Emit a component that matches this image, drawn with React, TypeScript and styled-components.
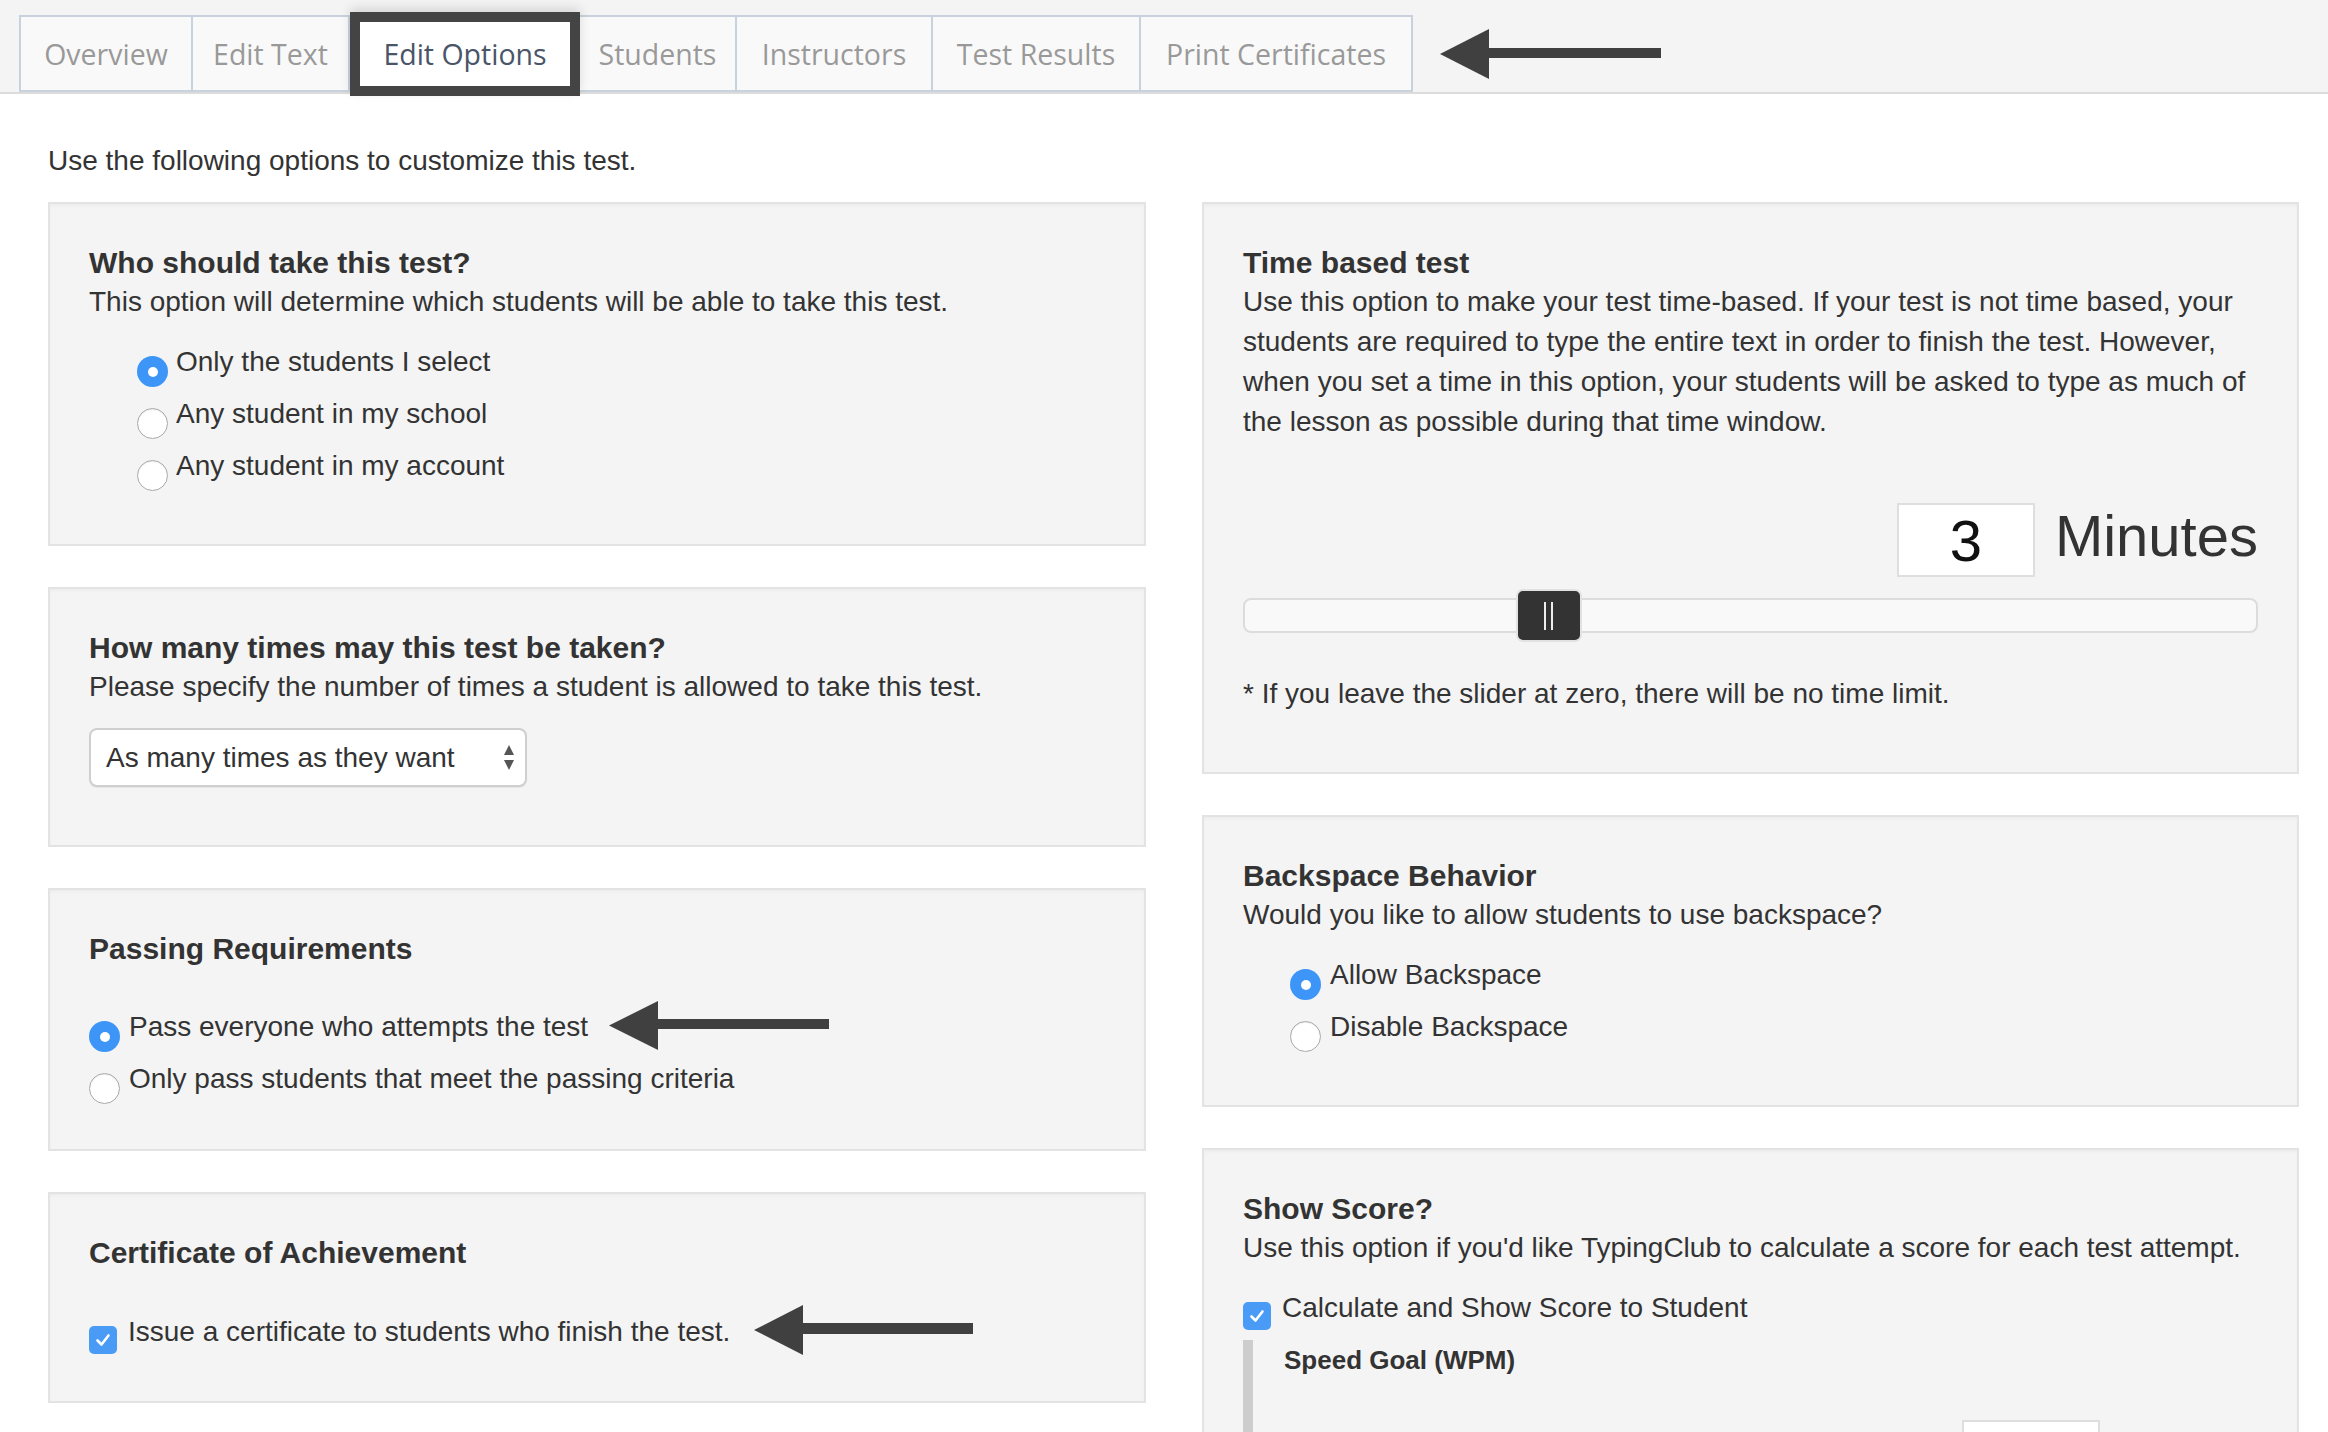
import React from 'react';
import styled, { createGlobalStyle } from 'styled-components';

const Global = createGlobalStyle`
  html, body { margin: 0; padding: 0; background: #ffffff; }
  body { font-family: "Liberation Sans", Arial, Helvetica, sans-serif; color: #333333; }
  * { box-sizing: border-box; }
`;

const Header = styled.header`
  height: 94px;
  background: #f4f4f4;
  border-bottom: 2px solid #dcdcdc;
  padding: 15px 0 0 19px;
  display: flex;
  align-items: flex-start;
`;

const Tab = styled.div<{ $w: number; $first?: boolean }>`
  width: ${(p) => p.$w}px;
  height: 77px;
  display: flex;
  align-items: center;
  justify-content: center;
  background: #f9f9f9;
  border: 2px solid #c8d2df;
  border-left-width: ${(p) => (p.$first ? 2 : 0)}px;
  font-family: "Open Sans", "Noto Sans", sans-serif;
  font-size: 28.5px;
  color: #999999;
  white-space: nowrap;
`;

const ActiveTab = styled(Tab)`
  height: 84px;
  margin-top: -3px;
  border: 10px solid #444444;
  background: #ffffff;
  color: #4a5568;
  position: relative;
  z-index: 1;
  box-shadow: 0 -4px 10px rgba(0, 0, 0, 0.12);
`;

const ArrowSvg = styled.svg<{ $ml?: number; $mt?: number }>`
  flex: none;
  display: block;
  margin-left: ${(p) => p.$ml ?? 0}px;
  margin-top: ${(p) => p.$mt ?? 0}px;
`;

const Main = styled.main`
  padding: 47px 29px 80px 48px;
`;

const Intro = styled.p`
  margin: 0;
  font-size: 28px;
  line-height: 40px;
  color: #333333;
`;

const Columns = styled.div`
  display: grid;
  grid-template-columns: 1098px 1097px;
  column-gap: 56px;
  margin-top: 21px;
  align-items: start;
`;

const Column = styled.div`
  display: flex;
  flex-direction: column;
  gap: 41px;
`;

const Card = styled.section<{ $pb?: number }>`
  background: #f4f4f4;
  border: 2px solid #e3e3e3;
  box-shadow: inset 0 2px 3px rgba(0, 0, 0, 0.03);
  padding: 40px 39px ${(p) => p.$pb ?? 58}px;
`;

const Heading = styled.h3`
  margin: 0;
  font-size: 30px;
  line-height: 38px;
  font-weight: 700;
  color: #333333;
`;

const Desc = styled.p`
  margin: 0;
  font-size: 28px;
  line-height: 40px;
  color: #333333;
`;

const OptionList = styled.div<{ $mt: number; $indent?: number }>`
  display: flex;
  flex-direction: column;
  gap: 12px;
  margin-top: ${(p) => p.$mt}px;
  padding-left: ${(p) => p.$indent ?? 0}px;
`;

const OptionRow = styled.label<{ $gap?: number }>`
  display: flex;
  align-items: flex-start;
  height: 40px;
  gap: ${(p) => p.$gap ?? 8}px;
  font-size: 28px;
  line-height: 40px;
  color: #333333;
  white-space: nowrap;
`;

const Radio = styled.span<{ $on?: boolean }>`
  flex: none;
  width: 31px;
  height: 31px;
  margin-top: 14px;
  border-radius: 50%;
  position: relative;
  background: ${(p) => (p.$on ? '#3d95f7' : '#ffffff')};
  border: ${(p) => (p.$on ? 'none' : '1px solid #a9a9a9')};
  box-shadow: ${(p) => (p.$on ? 'none' : 'inset 0 1px 1px rgba(0,0,0,0.08)')};
  &::after {
    content: '';
    display: ${(p) => (p.$on ? 'block' : 'none')};
    position: absolute;
    left: 50%;
    top: 50%;
    width: 10px;
    height: 10px;
    margin: -5px 0 0 -5px;
    border-radius: 50%;
    background: #ffffff;
  }
`;

const Checkbox = styled.span`
  flex: none;
  width: 28px;
  height: 28px;
  margin-top: 14px;
  border-radius: 5px;
  background: #4a9bf6;
  display: flex;
  align-items: center;
  justify-content: center;
`;

const SelectBox = styled.div`
  width: 438px;
  height: 59px;
  margin-top: 21px;
  background: #ffffff;
  border: 2px solid #cfcfcf;
  border-radius: 8px;
  box-shadow: 0 1px 1px rgba(0, 0, 0, 0.06);
  padding: 0 10px 0 15px;
  display: flex;
  align-items: center;
  justify-content: space-between;
  font-size: 28px;
  color: #333333;
`;

const ValueRow = styled.div<{ $mt: number; $gap: number }>`
  display: flex;
  justify-content: flex-end;
  align-items: flex-start;
  gap: ${(p) => p.$gap}px;
  margin-top: ${(p) => p.$mt}px;
`;

const NumberBox = styled.div`
  width: 138px;
  height: 74px;
  background: #ffffff;
  border: 2px solid #dedede;
  display: flex;
  align-items: center;
  justify-content: center;
  font-size: 58px;
  color: #111111;
`;

const UnitText = styled.span`
  font-size: 58px;
  line-height: 66px;
  color: #333333;
`;

const Track = styled.div`
  position: relative;
  height: 35px;
  margin-top: 21px;
  background: #f9f9f9;
  border: 2px solid #dcdcdc;
  border-radius: 8px;
`;

const Handle = styled.div`
  position: absolute;
  top: -11px;
  width: 66px;
  height: 53px;
  background: #333333;
  border: 2px solid #e2e2e2;
  border-radius: 7px;
  display: flex;
  align-items: center;
  justify-content: center;
  gap: 5px;
`;

const Grip = styled.span`
  width: 2px;
  height: 28px;
  background: #eeeeee;
`;

const Footnote = styled.p`
  margin: 41px 0 0;
  font-size: 28px;
  line-height: 40px;
  color: #333333;
`;

const SubSection = styled.div`
  margin-top: 12px;
  border-left: 10px solid #cdcdcd;
  padding: 3px 0 0 31px;
  min-height: 260px;
`;

const SubHeading = styled.h4`
  margin: 0;
  font-size: 26px;
  line-height: 34px;
  font-weight: 700;
  color: #333333;
`;

type ArrowProps = { w: number; h: number; shaftTop: number; shaftH: number; ml?: number; mt?: number };

const Arrow = ({ w, h, shaftTop, shaftH, ml, mt }: ArrowProps) => (
  <ArrowSvg width={w} height={h} viewBox={`0 0 ${w} ${h}`} $ml={ml} $mt={mt}>
    <polygon points={`0,${h / 2} 49,0 49,${h}`} fill="#404040" />
    <rect x={47} y={shaftTop} width={w - 47} height={shaftH} fill="#404040" />
  </ArrowSvg>
);

const CheckMark = () => (
  <svg width="20" height="20" viewBox="0 0 20 20">
    <path d="M4.5 10.5 L8.5 14.5 L15.5 5.5" fill="none" stroke="#ffffff" strokeWidth="2.6" strokeLinecap="round" strokeLinejoin="round" />
  </svg>
);

const SelectArrows = () => (
  <svg width="12" height="26" viewBox="0 0 12 26">
    <polygon points="6,0 11,10 1,10" fill="#555555" />
    <polygon points="1,15 11,15 6,25" fill="#555555" />
  </svg>
);

const tabs = [
  { label: 'Overview', w: 174 },
  { label: 'Edit Text', w: 157 },
  { label: 'Edit Options', w: 230, active: true },
  { label: 'Students', w: 157 },
  { label: 'Instructors', w: 196 },
  { label: 'Test Results', w: 208 },
  { label: 'Print Certificates', w: 272 },
];

const minutes = 3;
const handlePct = 26.8;

export default function App() {
  return (
    <>
      <Global />
      <Header>
        {tabs.map((t, i) =>
          t.active ? (
            <ActiveTab key={t.label} $w={t.w}>
              {t.label}
            </ActiveTab>
          ) : (
            <Tab key={t.label} $w={t.w} $first={i === 0}>
              {t.label}
            </Tab>
          )
        )}
        <Arrow w={221} h={50} shaftTop={19} shaftH={10} ml={27} mt={14} />
      </Header>
      <Main>
        <Intro>Use the following options to customize this test.</Intro>
        <Columns>
          <Column>
            <Card>
              <Heading>Who should take this test?</Heading>
              <Desc>This option will determine which students will be able to take this test.</Desc>
              <OptionList $mt={20} $indent={48}>
                <OptionRow>
                  <Radio $on />
                  Only the students I select
                </OptionRow>
                <OptionRow>
                  <Radio />
                  Any student in my school
                </OptionRow>
                <OptionRow>
                  <Radio />
                  Any student in my account
                </OptionRow>
              </OptionList>
            </Card>

            <Card>
              <Heading>How many times may this test be taken?</Heading>
              <Desc>Please specify the number of times a student is allowed to take this test.</Desc>
              <SelectBox role="listbox">
                <span>As many times as they want</span>
                <SelectArrows />
              </SelectBox>
            </Card>

            <Card $pb={50}>
              <Heading>Passing Requirements</Heading>
              <OptionList $mt={39}>
                <OptionRow $gap={9}>
                  <Radio $on />
                  Pass everyone who attempts the test
                  <Arrow w={220} h={49} shaftTop={18} shaftH={10} ml={12} mt={-6} />
                </OptionRow>
                <OptionRow $gap={9}>
                  <Radio />
                  Only pass students that meet the passing criteria
                </OptionRow>
              </OptionList>
            </Card>

            <Card $pb={49}>
              <Heading>Certificate of Achievement</Heading>
              <OptionList $mt={40}>
                <OptionRow $gap={11}>
                  <Checkbox>
                    <CheckMark />
                  </Checkbox>
                  Issue a certificate to students who finish the test.
                  <Arrow w={219} h={50} shaftTop={18} shaftH={11} ml={13} mt={-7} />
                </OptionRow>
              </OptionList>
            </Card>
          </Column>

          <Column>
            <Card>
              <Heading>Time based test</Heading>
              <Desc>
                Use this option to make your test time-based. If your test is not time based, your students are
                required to type the entire text in order to finish the test. However, when you set a time in this
                option, your students will be asked to type as much of the lesson as possible during that time window.
              </Desc>
              <ValueRow $mt={61} $gap={20}>
                <NumberBox>{minutes}</NumberBox>
                <UnitText>Minutes</UnitText>
              </ValueRow>
              <Track>
                <Handle style={{ left: `${handlePct}%` }}>
                  <Grip />
                  <Grip />
                </Handle>
              </Track>
              <Footnote>* If you leave the slider at zero, there will be no time limit.</Footnote>
            </Card>

            <Card>
              <Heading>Backspace Behavior</Heading>
              <Desc>Would you like to allow students to use backspace?</Desc>
              <OptionList $mt={20} $indent={47}>
                <OptionRow $gap={9}>
                  <Radio $on />
                  Allow Backspace
                </OptionRow>
                <OptionRow $gap={9}>
                  <Radio />
                  Disable Backspace
                </OptionRow>
              </OptionList>
            </Card>

            <Card>
              <Heading>Show Score?</Heading>
              <Desc>Use this option if you'd like TypingClub to calculate a score for each test attempt.</Desc>
              <OptionList $mt={20}>
                <OptionRow $gap={11}>
                  <Checkbox>
                    <CheckMark />
                  </Checkbox>
                  Calculate and Show Score to Student
                </OptionRow>
              </OptionList>
              <SubSection>
                <SubHeading>Speed Goal (WPM)</SubHeading>
                <ValueRow $mt={43} $gap={16}>
                  <NumberBox>20</NumberBox>
                  <UnitText>WPM</UnitText>
                </ValueRow>
              </SubSection>
            </Card>
          </Column>
        </Columns>
      </Main>
    </>
  );
}
